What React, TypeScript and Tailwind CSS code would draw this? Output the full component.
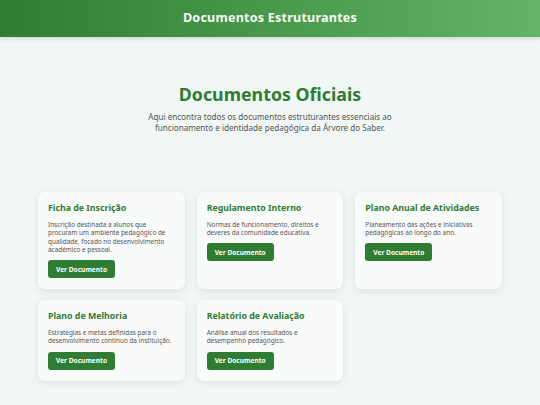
import React from "react";

const docs = [
  {
    title: "Ficha de Inscrição",
    desc: "Inscrição destinada a alunos que procuram um ambiente pedagógico de qualidade, focado no desenvolvimento académico e pessoal.",
  },
  {
    title: "Regulamento Interno",
    desc: "Normas de funcionamento, direitos e deveres da comunidade educativa.",
  },
  {
    title: "Plano Anual de Atividades",
    desc: "Planeamento das ações e iniciativas pedagógicas ao longo do ano.",
  },
  {
    title: "Plano de Melhoria",
    desc: "Estratégias e metas definidas para o desenvolvimento contínuo da instituição.",
  },
  {
    title: "Relatório de Avaliação",
    desc: "Análise anual dos resultados e desempenho pedagógico.",
  },
];

export default function App() {
  return (
    <div className="min-h-[405px] w-[540px] bg-[#f1f7f4] font-['Noto_Sans',sans-serif]">
      <header className="flex h-[37px] items-center justify-center bg-gradient-to-r from-[#2e7d32] to-[#63b467] shadow-[0_2px_4px_rgba(0,0,0,0.12)]">
        <h1 className="text-[12.6px] font-bold tracking-[0.2px] text-[#f3fbf3]">Documentos Estruturantes</h1>
      </header>
      <section className="flex flex-col items-center pt-[45px]">
        <h2 className="text-[17.8px] font-bold leading-[24px] text-[#2e7d32]">Documentos Oficiais</h2>
        <p className="mt-[5px] w-[290px] text-center text-[8.1px] leading-[11px] text-[#555]">
          Aqui encontra todos os documentos estruturantes essenciais ao funcionamento e identidade pedagógica da Árvore do Saber.
        </p>
      </section>
      <div className="mx-auto mt-[59px] grid w-[464px] grid-cols-3 gap-x-[12px] gap-y-[11px]">
        {docs.map((d) => (
          <div
            key={d.title}
            className="flex flex-col items-start rounded-[7px] bg-[#f9fbfa] px-[10px] pt-[10px] pb-[11px] shadow-[0_2px_8px_rgba(0,0,0,0.09)]"
          >
            <h3 className="text-[8.8px] font-bold leading-[13px] text-[#2e7d32]">{d.title}</h3>
            <p className="mt-[5.5px] text-[6.4px] leading-[8.6px] text-[#555]">{d.desc}</p>
            <button className="mt-[5.5px] rounded-[3px] bg-[#2e7d32] px-[8px] py-[4.5px] text-[6.6px] font-bold leading-[9px] text-white">
              Ver Documento
            </button>
          </div>
        ))}
      </div>
    </div>
  );
}
